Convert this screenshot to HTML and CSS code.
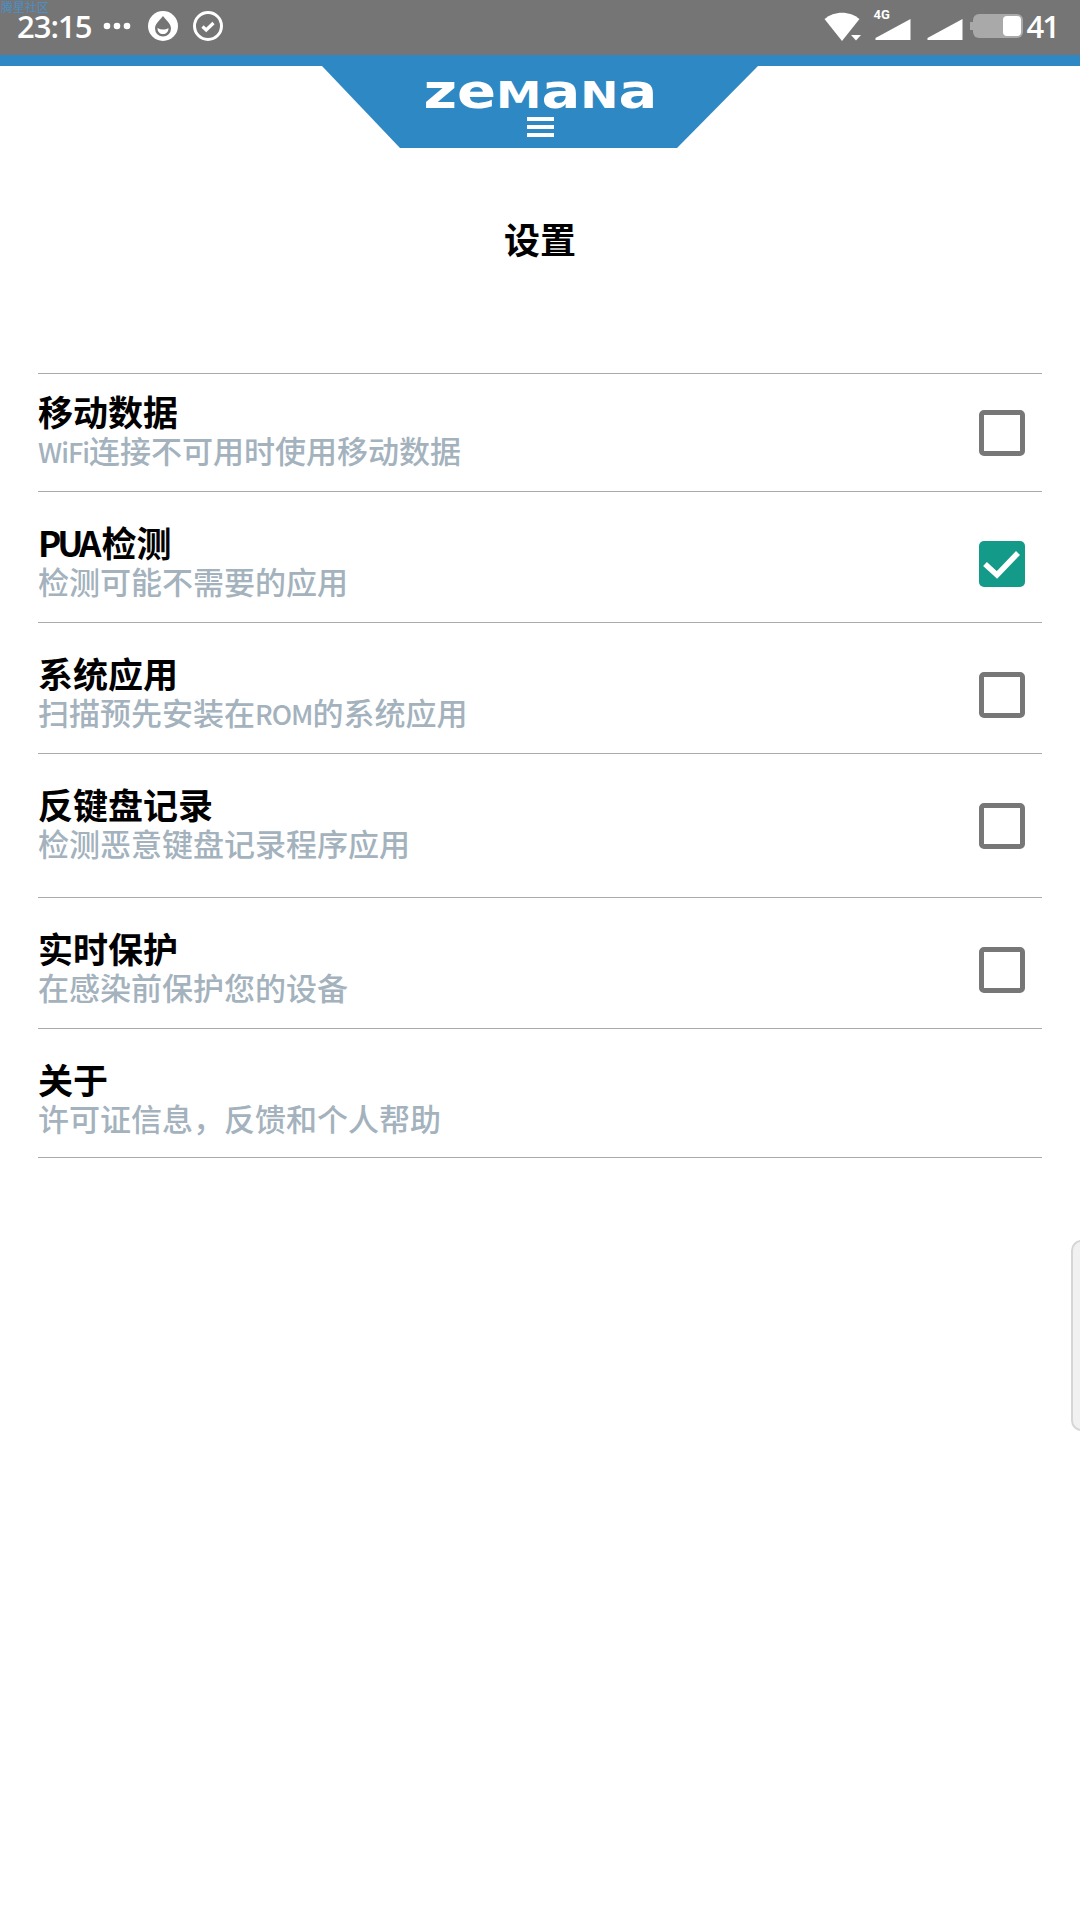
FILE: index.html
```html
<!DOCTYPE html>
<html lang="zh-CN">
<head>
  <meta charset="UTF-8" />
  <meta name="viewport" content="width=device-width, initial-scale=1.0"/>
  <title>设置</title>
  <link rel="stylesheet" href="styles.css">
</head>
<body>
  <div class="statusbar">
    <div class="watermark">腾星社区</div>
    <div class="status-left">
      <span class="time">23:15</span>
      <svg class="dots" width="28" height="8" viewBox="0 0 28 8"><circle cx="4" cy="4" r="3.3"/><circle cx="14" cy="4" r="3.3"/><circle cx="24" cy="4" r="3.3"/></svg>
      <svg class="status-icon" width="30" height="30" viewBox="0 0 30 30">
        <circle cx="15" cy="15" r="15" fill="#fff"/>
        <path d="M15 5 C18 9 23 12.5 23 17.5 A8 8 0 0 1 7 17.5 C7 12.5 12 9 15 5Z" fill="#757575"/>
        <path d="M9.5 17 C13 19 17 19 20.5 17 C20.5 21 18 23 15 23 C12 23 9.5 21 9.5 17Z" fill="#fff"/>
      </svg>
      <svg class="status-icon" width="30" height="30" viewBox="0 0 30 30" fill="none" stroke="#fff">
        <circle cx="15" cy="15" r="13.5" stroke-width="3"/>
        <path d="M9.5 15.5 L13.2 19 L20.5 12" stroke-width="3.2"/>
      </svg>
    </div>
    <div class="status-right">
      <svg class="wifi" width="38" height="30" viewBox="0 0 38 30" fill="#fff">
        <path d="M0.5 7 C10 -1.5 26 -1.5 35.5 7 L18 29Z"/>
        <path d="M27 23 H37 L32 28.5Z"/>
      </svg>
      <div class="signal-4g">
        <span class="net">4G</span>
        <svg width="36" height="22" viewBox="0 0 36 22" fill="#fff"><path d="M35.5 0 V21 H0.5 V19Z"/></svg>
      </div>
      <svg class="signal" width="36" height="22" viewBox="0 0 36 22" fill="#fff"><path d="M35.5 0 V21 H0.5 V19Z"/></svg>
      <div class="battery"><div class="battery-fill"></div></div>
      <span class="level">41</span>
    </div>
  </div>

  <div class="topbar">
    <div class="tab">
      <div class="logo">ze<span class="logo-cap">M</span>a<span class="logo-cap">N</span>a</div>
      <div class="menu-icon"><i></i><i></i><i></i></div>
    </div>
  </div>

  <h2>设置</h2>

  <div class="settings">
    <div class="row first">
      <div class="row-text">
        <div class="row-title">移动数据</div>
        <div class="row-sub"><span class="latin">WiFi</span>连接不可用时使用移动数据</div>
      </div>
      <span class="check"></span>
    </div>
    <div class="row">
      <div class="row-text">
        <div class="row-title"><span class="latin-title">PUA</span>检测</div>
        <div class="row-sub">检测可能不需要的应用</div>
      </div>
      <span class="check on">
        <svg width="46" height="46" viewBox="0 0 46 46" fill="none" stroke="#fff" stroke-width="5.5"><path d="M6 23 L18 34 L39 12"/></svg>
      </span>
    </div>
    <div class="row">
      <div class="row-text">
        <div class="row-title">系统应用</div>
        <div class="row-sub">扫描预先安装在<span class="latin">ROM</span>的系统应用</div>
      </div>
      <span class="check"></span>
    </div>
    <div class="row tall">
      <div class="row-text">
        <div class="row-title">反键盘记录</div>
        <div class="row-sub">检测恶意键盘记录程序应用</div>
      </div>
      <span class="check"></span>
    </div>
    <div class="row">
      <div class="row-text">
        <div class="row-title">实时保护</div>
        <div class="row-sub">在感染前保护您的设备</div>
      </div>
      <span class="check"></span>
    </div>
    <div class="row last">
      <div class="row-text">
        <div class="row-title">关于</div>
        <div class="row-sub">许可证信息，反馈和个人帮助</div>
      </div>
    </div>
  </div>

  <div class="side-handle"></div>
</body>
</html>
```

FILE: styles.css
```css
* {
  box-sizing: border-box;
  margin: 0;
  padding: 0;
}

body {
  width: 1080px;
  height: 1920px;
  background-color: #fff;
  color: #000;
  font-family: "Noto Sans CJK SC", "Liberation Sans", sans-serif;
  overflow: hidden;
  position: relative;
}

.statusbar {
  height: 55px;
  background: #757575;
  color: #fff;
  padding: 0 22px 3px 17px;
  display: flex;
  justify-content: space-between;
  align-items: center;
  position: relative;
}

.watermark {
  position: absolute;
  top: 0;
  left: 1px;
  font-size: 12px;
  line-height: 13px;
  color: #4a8fc6;
}

.status-left,
.status-right {
  display: flex;
  align-items: center;
}

.time,
.level {
  font-family: "Open Sans", sans-serif;
  font-weight: 600;
  font-size: 31px;
  line-height: 40px;
  letter-spacing: -1px;
}

.dots {
  fill: #fff;
  margin-left: 12px;
}

.status-icon {
  margin-left: 15px;
}

.dots + .status-icon {
  margin-left: 17px;
}

.wifi {
  margin-top: 2px;
}

.signal-4g {
  position: relative;
  margin-left: 13px;
  margin-top: 8px;
  height: 22px;
  display: flex;
}

.net {
  position: absolute;
  top: -11px;
  left: -1px;
  font-family: "Roboto", sans-serif;
  font-weight: bold;
  font-size: 13px;
  line-height: 14px;
}

.signal {
  margin-left: 16px;
  margin-top: 8px;
}

.battery {
  width: 50px;
  height: 24px;
  margin-left: 10px;
  background: #a9a9a9;
  border-radius: 6px;
  display: flex;
  justify-content: flex-end;
  padding: 2px;
  position: relative;
}

.battery::before {
  content: "";
  position: absolute;
  left: -3px;
  top: 8px;
  width: 3px;
  height: 8px;
  background: #a9a9a9;
}

.battery-fill {
  width: 18px;
  background: #fff;
  border-radius: 4px;
}

.level {
  margin-left: 4px;
  letter-spacing: -2px;
}

.topbar {
  border-top: 11px solid #2e88c4;
}

.tab {
  width: 436px;
  height: 82px;
  margin: 0 auto;
  background: #2e88c4;
  clip-path: polygon(0 0, 100% 0, 355px 100%, 78px 100%);
  display: flex;
  flex-direction: column;
  align-items: center;
  padding-top: 10px;
}

.logo {
  height: 30px;
  font-family: "DejaVu Sans", sans-serif;
  font-weight: bold;
  font-size: 48px;
  line-height: 30px;
  color: #fff;
  transform: scaleX(1.2);
  white-space: nowrap;
}

.logo-cap {
  font-size: 38px;
}

.menu-icon {
  width: 27px;
  margin-top: 11px;
  display: flex;
  flex-direction: column;
  gap: 4px;
}

.menu-icon i {
  display: block;
  height: 4px;
  background: #fff;
}

h2 {
  margin-top: 64px;
  height: 52px;
  font-size: 36px;
  line-height: 52px;
  font-weight: bold;
  text-align: center;
}

.settings {
  margin: 109px 38px 0;
  border-top: 1px solid #a8abad;
}

.row {
  display: flex;
  justify-content: space-between;
  align-items: center;
  padding: 31px 17px 18px 0;
  border-bottom: 1px solid #a8abad;
}

.row.first {
  padding-top: 18px;
}

.row.tall {
  padding-bottom: 31px;
}

.row.last {
  padding-bottom: 16px;
}

.row-title {
  height: 40px;
  font-size: 35px;
  line-height: 38px;
  font-weight: bold;
}

.row-sub {
  height: 41px;
  font-size: 31px;
  line-height: 36px;
  font-weight: 500;
  color: #a3b2bd;
}

.latin {
  font-size: 27px;
  letter-spacing: -1px;
}

.latin-title {
  letter-spacing: -4px;
  margin-right: 4px;
}

.check {
  width: 46px;
  height: 46px;
  border: 5px solid #777;
  border-radius: 5px;
  background: #fff;
}

.check.on {
  border: none;
  background: #149a88;
}

.check.on svg {
  display: block;
}

.side-handle {
  position: absolute;
  right: -12px;
  top: 1240px;
  width: 21px;
  height: 191px;
  background: #f1f1f1;
  border: 2px solid #d6d6d6;
  border-radius: 12px;
}
```
